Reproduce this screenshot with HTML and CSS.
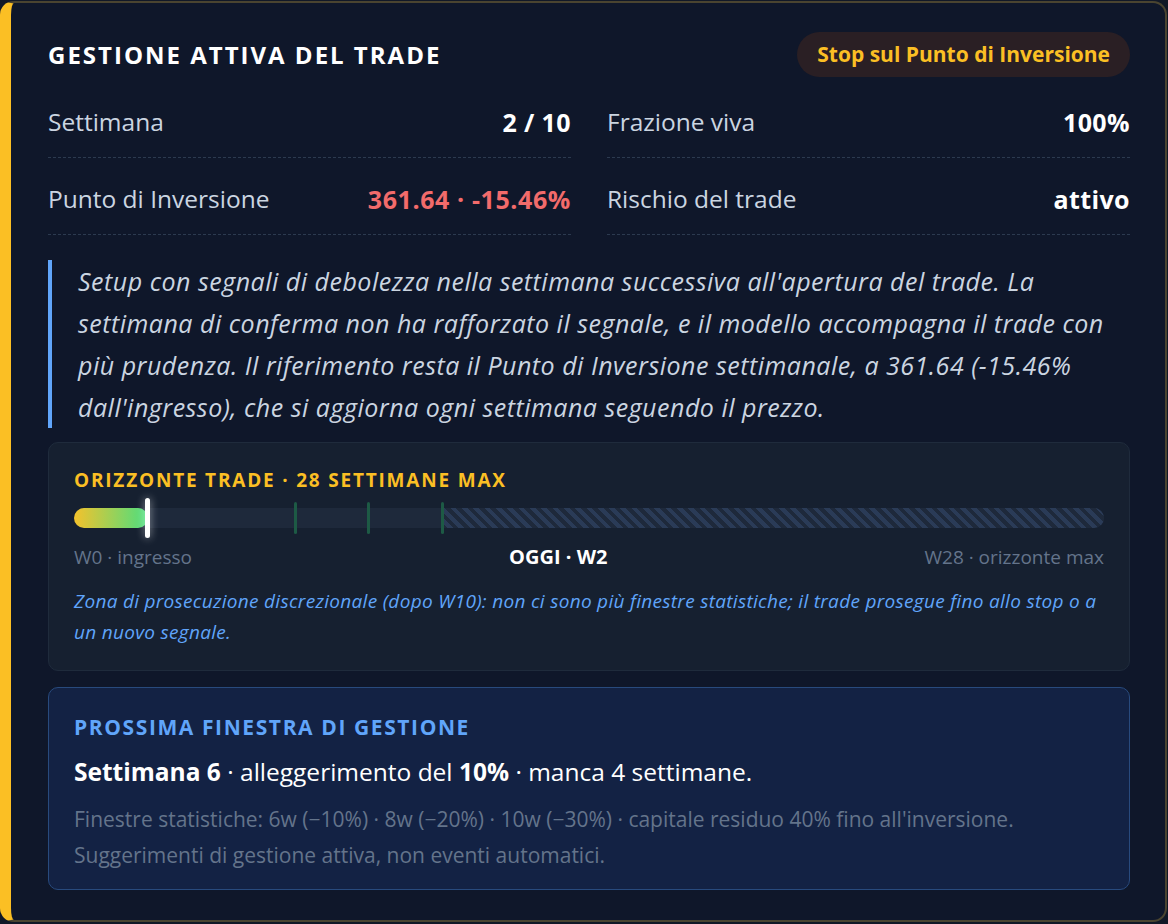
FILE: index.html
```html
<!DOCTYPE html>
<html lang="it">
<head>
<meta charset="utf-8">
<title>Gestione attiva del trade</title>
<link rel="stylesheet" href="styles.css">
</head>
<body>
<section class="card">
  <header class="head">
    <h2 class="title">GESTIONE ATTIVA DEL TRADE</h2>
    <span class="badge">Stop sul Punto di Inversione</span>
  </header>

  <div class="stats">
    <div class="stat"><span class="label">Settimana</span><span class="value">2 / 10</span></div>
    <div class="stat"><span class="label">Frazione viva</span><span class="value">100%</span></div>
    <div class="stat"><span class="label">Punto di Inversione</span><span class="value red">361.64 · -15.46%</span></div>
    <div class="stat"><span class="label">Rischio del trade</span><span class="value">attivo</span></div>
  </div>

  <blockquote class="quote">Setup con segnali di debolezza nella settimana successiva all'apertura del trade. La settimana di conferma non ha rafforzato il segnale, e il modello accompagna il trade con più prudenza. Il riferimento resta il Punto di Inversione settimanale, a 361.64 (-15.46% dall'ingresso), che si aggiorna ogni settimana seguendo il prezzo.</blockquote>

  <div class="horizon">
    <div class="h-label">ORIZZONTE TRADE · 28 SETTIMANE MAX</div>
    <div class="track">
      <div class="stripes" style="left: 35.714%"></div>
      <div class="fill" style="width: 7.143%"></div>
      <div class="tick" style="left: 21.429%"></div>
      <div class="tick" style="left: 28.571%"></div>
      <div class="tick" style="left: 35.714%"></div>
      <div class="cursor" style="left: 7.143%"></div>
    </div>
    <div class="ticks-labels">
      <span class="muted">W0 · ingresso</span>
      <span class="now">OGGI · W2</span>
      <span class="muted">W28 · orizzonte max</span>
    </div>
    <p class="note">Zona di prosecuzione discrezionale (dopo W10): non ci sono più finestre statistiche; il trade prosegue fino allo stop o a un nuovo segnale.</p>
  </div>

  <div class="next">
    <div class="n-title">PROSSIMA FINESTRA DI GESTIONE</div>
    <p class="n-main"><strong>Settimana 6</strong> · alleggerimento del <strong>10%</strong> · manca 4 settimane.</p>
    <p class="n-small">Finestre statistiche: 6w (−10%) · 8w (−20%) · 10w (−30%) · capitale residuo 40% fino all'inversione. Suggerimenti di gestione attiva, non eventi automatici.</p>
  </div>
</section>
</body>
</html>
```

FILE: styles.css
```css
* { box-sizing: border-box; }

html, body {
  margin: 0;
  background: #111827;
}

body {
  padding: 1px 1px 3px 0;
  font-family: "Open Sans", "Noto Sans", sans-serif;
  color: #e2e8f0;
}

.card {
  background: #0f172a;
  border: 2px solid #4a4430;
  border-left: 11px solid #fbbf24;
  border-radius: 14px;
  padding: 29px 35px 30px 37px;
}

.head {
  display: flex;
  justify-content: space-between;
  align-items: center;
  height: 45px;
}

.title {
  margin: 0;
  font-size: 24px;
  font-weight: 700;
  letter-spacing: 2px;
  color: #ffffff;
}

.badge {
  background: #2a1f24;
  color: #fbbf24;
  font-weight: 700;
  font-size: 21px;
  border-radius: 23px;
  height: 45px;
  line-height: 45px;
  padding: 0 20px;
}

.stats {
  display: grid;
  grid-template-columns: 1fr 1fr;
  column-gap: 36px;
  row-gap: 6px;
  margin-top: 10px;
}

.stat {
  display: flex;
  justify-content: space-between;
  align-items: center;
  padding: 17px 0;
  line-height: 36px;
  font-size: 24.5px;
  border-bottom: 1px dashed #2c3a4f;
}

.label { color: #cbd5e1; }
.value { color: #ffffff; font-weight: 700; font-size: 25px; letter-spacing: 0.4px; }
.value.red { color: #f26b6b; letter-spacing: 0.6px; }

.quote {
  margin: 25px 0 0;
  border-left: 4px solid #60a5fa;
  padding-left: 26px;
  font-style: italic;
  font-size: 25px;
  letter-spacing: 0.5px;
  line-height: 42px;
  color: #cbd5e1;
}

.horizon {
  margin-top: 14px;
  background: #162030;
  border: 1px solid #1f2b3c;
  border-radius: 10px;
  padding: 24px 25px 22px;
}

.h-label {
  font-size: 19px;
  font-weight: 700;
  letter-spacing: 1.8px;
  color: #fbbf24;
  line-height: 26px;
}

.track {
  position: relative;
  margin-top: 15px;
  height: 20px;
  border-radius: 10px;
  background: #1e293b;
}

.fill {
  position: absolute;
  left: 0;
  top: 0;
  bottom: 0;
  border-radius: 10px;
  background: linear-gradient(90deg, #f4c22c, #4ade80);
}

.stripes {
  position: absolute;
  top: 0;
  bottom: 0;
  right: 0;
  border-radius: 0 10px 10px 0;
  background: repeating-linear-gradient(45deg, #1e293b 0 4px, #2a3b57 4px 8px);
}

.tick {
  position: absolute;
  top: -6px;
  bottom: -6px;
  width: 3px;
  margin-left: -1px;
  border-radius: 2px;
  background: #1d5a45;
}

.cursor {
  position: absolute;
  top: -10px;
  bottom: -10px;
  width: 5px;
  margin-left: -3px;
  border-radius: 3px;
  background: #ffffff;
  box-shadow: 0 0 8px rgba(255, 255, 255, 0.55);
}

.ticks-labels {
  display: flex;
  justify-content: space-between;
  margin-top: 16px;
  font-size: 19px;
  line-height: 26px;
}

.muted { color: #64748b; }
.now { color: #ffffff; font-weight: 700; font-size: 20px; }

.note {
  margin: 16px 0 0;
  font-style: italic;
  font-size: 19px;
  letter-spacing: 0.3px;
  line-height: 31px;
  color: #60a5fa;
}

.next {
  margin-top: 16px;
  background: #132244;
  border: 1px solid #284a7d;
  border-radius: 10px;
  padding: 25px 25px 16px;
}

.n-title {
  font-size: 21px;
  font-weight: 700;
  letter-spacing: 1.6px;
  color: #60a5fa;
  line-height: 28px;
}

.n-main {
  margin: 14px 0 0;
  font-size: 24.5px;
  line-height: 34px;
  color: #ffffff;
}

.n-main strong { font-weight: 700; }

.n-small {
  margin: 12px 0 0;
  font-size: 21px;
  line-height: 36px;
  color: #64748b;
}
```
